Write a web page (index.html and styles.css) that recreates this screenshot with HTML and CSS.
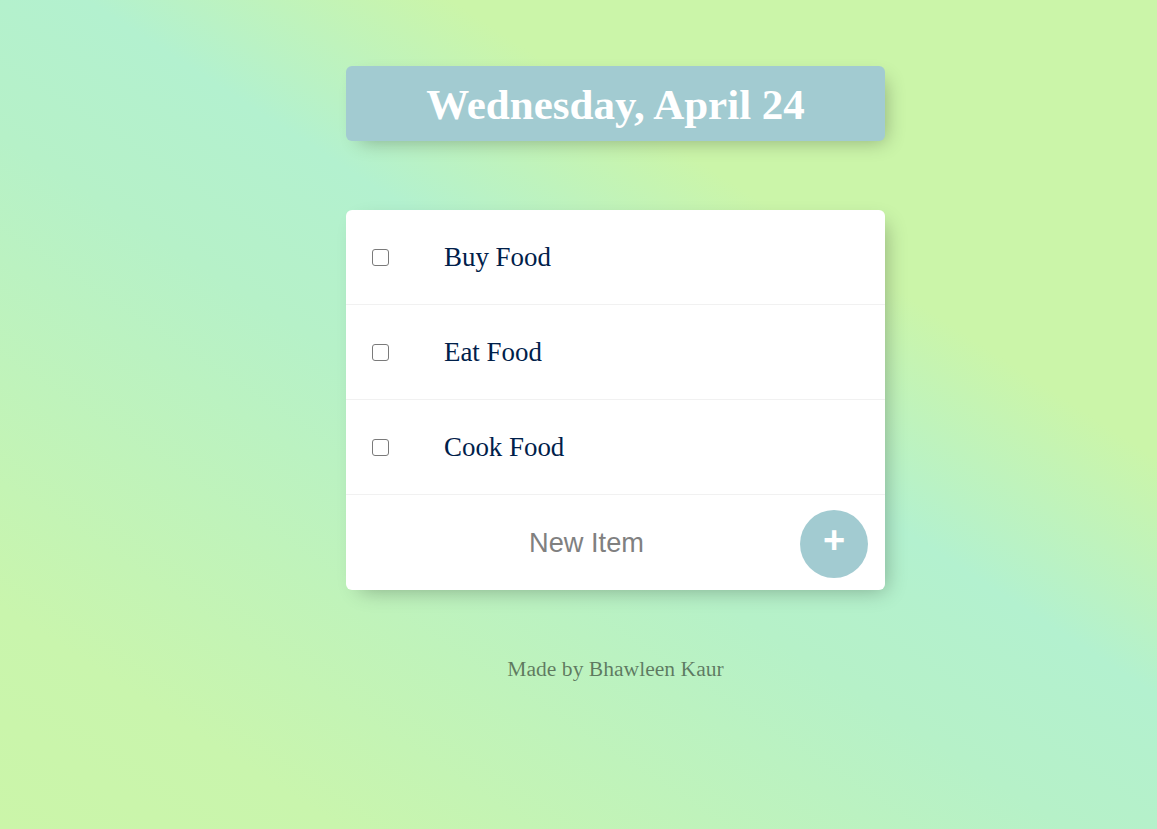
FILE: index.html
```html
<!DOCTYPE html>
<html lang="en">
<head>
<meta charset="utf-8">
<title>To Do List</title>
<link rel="stylesheet" href="styles.css">
</head>
<body>
<div class="page">
  <div class="box heading">
    <h1 class="title">Wednesday, April 24</h1>
  </div>
  <div class="box list">
    <div class="item">
      <input type="checkbox" class="check">
      <p class="text">Buy Food</p>
    </div>
    <div class="item">
      <input type="checkbox" class="check">
      <p class="text">Eat Food</p>
    </div>
    <div class="item">
      <input type="checkbox" class="check">
      <p class="text">Cook Food</p>
    </div>
    <form class="item new-form">
      <input type="text" class="new-input" name="newItem" placeholder="New Item" autocomplete="off">
      <button type="submit" class="add-btn">+</button>
    </form>
  </div>
  <footer class="footer">Made by Bhawleen Kaur</footer>
</div>
</body>
</html>
```

FILE: styles.css
```css
html {
  min-height: 100%;
  background-color: #c4f3b8;
  background-image: linear-gradient(33deg, #cbf5a9 0%, #c9f5ad 14%, #b6f1c8 44%, #b3f1cf 56%, #cbf5a9 71%, #cbf5a9 100%);
}

body {
  margin: 0;
  padding-left: 74px;
  min-height: 829px;
  font-family: "Liberation Serif", "Times New Roman", serif;
}

.page {
  width: 539px;
  margin: 0 auto;
  padding-top: 66px;
  display: flex;
  flex-direction: column;
}

.box {
  background: #fff;
  border-radius: 6px;
  box-shadow: 7px 7px 20px -7px rgba(0, 0, 0, 0.3);
}

.heading {
  background-color: #a2cbd1;
  height: 75px;
  display: flex;
  align-items: center;
  justify-content: center;
}

.title {
  margin: 0;
  color: #fff;
  font-size: 43px;
  font-weight: bold;
  line-height: 1;
  padding-top: 2px;
}

.list {
  margin-top: 69px;
}

.item {
  height: 94px;
  display: flex;
  align-items: center;
  border-bottom: 1px solid #f1f1f1;
}

.item:last-child {
  border-bottom: 0;
  height: 95px;
}

.check {
  -webkit-appearance: none;
  appearance: none;
  box-sizing: border-box;
  width: 17px;
  height: 17px;
  margin: 0 0 0 26px;
  border: 1.4px solid #7a7a7a;
  border-radius: 3px;
  background: #fff;
}

.text {
  margin: 0 0 0 55px;
  font-size: 26.9px;
  color: #00204a;
}

.new-form {
  margin: 0;
  padding-left: 27px;
  padding-right: 17px;
}

.new-input {
  flex: 1;
  min-width: 0;
  height: 80px;
  border: none;
  padding: 0;
  text-align: center;
  font-family: "Liberation Sans", Arial, sans-serif;
  font-size: 27.2px;
  background: transparent;
}

.new-input:focus {
  outline: none;
}

.new-input::placeholder {
  color: #808080;
  opacity: 1;
}

.add-btn {
  width: 68px;
  height: 68px;
  border-radius: 50%;
  border: 0;
  background-color: #a2cbd1;
  color: #fff;
  font-family: "Liberation Sans", Arial, sans-serif;
  font-size: 38px;
  font-weight: bold;
  line-height: 1;
  padding: 0 0 8px 0;
  margin-top: 2px;
  cursor: pointer;
}

.footer {
  margin-top: 67px;
  text-align: center;
  font-size: 21.6px;
  color: rgba(0, 0, 0, 0.5);
}
```
